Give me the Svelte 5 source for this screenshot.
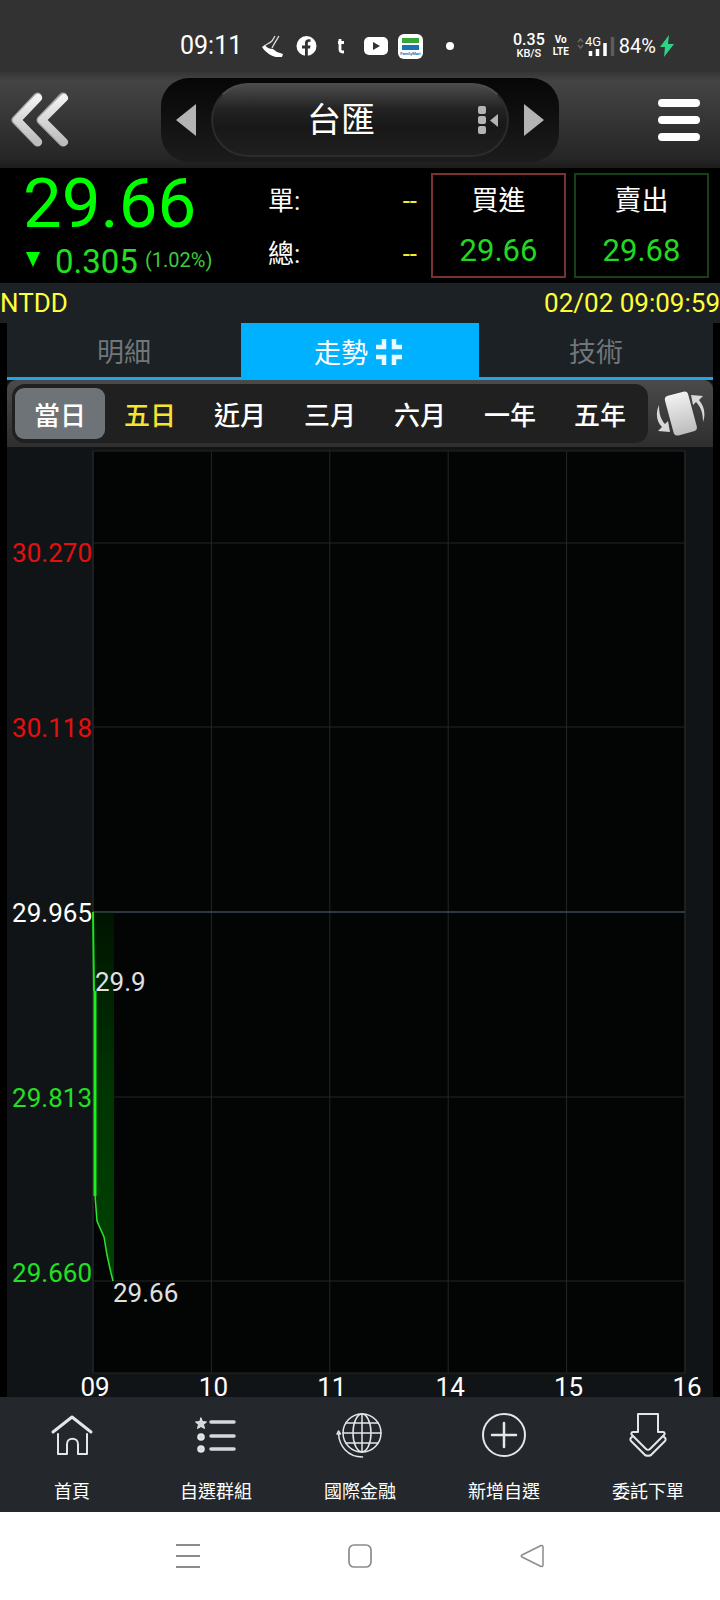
<script>
  let periods = ["當日", "五日", "近月", "三月", "六月", "一年", "五年"];
  let selectedPeriod = "當日";
  let visited = "五日";

  let tabs = ["明細", "走勢", "技術"];
  let selectedTab = "走勢";

  // chart geometry
  const plot = { left: 86, right: 678, top: 4, bottom: 926 };
  const hours = ["09", "10", "11", "14", "15", "16"];
  const step = (plot.right - plot.left) / (hours.length - 1);
  const levels = [
    { text: "30.270", line: 96, base: 115, kind: "up" },
    { text: "30.118", line: 280, base: 290, kind: "up" },
    { text: "29.965", line: 465, base: 475, kind: "flat" },
    { text: "29.813", line: 650, base: 660, kind: "down" },
    { text: "29.660", line: 834, base: 835, kind: "down" }
  ];
  const tail = "88,748 90,774 97,790 100,808 104,826 106,834";

  const menu = [
    { id: "home", label: "首頁" },
    { id: "list", label: "自選群組" },
    { id: "globe", label: "國際金融" },
    { id: "add", label: "新增自選" },
    { id: "order", label: "委託下單" }
  ];
</script>

<div class="page">
  <div class="status">
    <span class="clock">09:11</span>
    <div class="notices">
      <svg width="35" height="26" viewBox="0 0 35 26">
        <path d="M8 14l3-2c2 3 5 4 8 4l4 3c2 1 4 1 6 2l-1 3h-6c-5-1-11-5-14-10z" fill="#fff" />
        <path d="M10 13c3-2 6-3 8-5l3-5M18 15c2-4 4-7 7-12" fill="none" stroke="#ddd" stroke-width="1.3" />
      </svg>
      <svg width="35" height="26" viewBox="0 0 35 26">
        <circle cx="17.500" cy="13" r="10" fill="#fff" />
        <path d="M16 23v-7.500h-3v-3h3v-2.500c0-3 1.800-4.300 5.500-3.700v2.600c-2-.2-2.700.2-2.700 1.600v2h2.700l-.5 3h-2.200V23z" fill="#323232" />
      </svg>
      <svg width="35" height="26" viewBox="0 0 35 26">
        <path d="M16 6v10.500c0 2 1 2.500 4 2.500M14 9.500h6" fill="none" stroke="#fff" stroke-width="2.800" />
      </svg>
      <svg width="35" height="26" viewBox="0 0 35 26">
        <rect x="5" y="4" width="24" height="18" rx="5" fill="#fff" />
        <path d="M14 9l7 4-7 4z" fill="#323232" />
      </svg>
      <svg width="35" height="26" viewBox="0 0 35 26">
        <rect x="4" y="1" width="25" height="25" rx="6" fill="#fff" />
        <path d="M8 5h17v5H8z" fill="#37a53c" />
        <path d="M8 12h17v5H8z" fill="#1673b8" />
        <text x="16.500" y="22" text-anchor="middle" font-size="4" font-weight="700" fill="#1673b8">FamilyMart</text>
      </svg>
      <svg width="35" height="26" viewBox="0 0 35 26"><circle cx="21" cy="13" r="4" fill="#fff" /></svg>
    </div>
    <div class="radio">
      <span class="rate"><b>0.35</b><i>KB/S</i></span>
      <span class="volte"><b>Vo</b><b>LTE</b></span>
      <svg width="38" height="24" viewBox="0 0 38 24">
        <path d="M1 8l2.500-3L6 8M1 11l2.500 3L6 11" fill="none" stroke="#666" stroke-width="1.500" />
        <text x="8" y="12" font-size="13" fill="#fff">4G</text>
        <path d="M13.500 22v-5M20.500 22v-7M28 22V9" stroke="#fff" stroke-width="3.500" />
        <path d="M35.500 22V3" stroke="#5c5c5c" stroke-width="3.500" />
      </svg>
      <span class="battery">84%</span>
      <svg width="14" height="22" viewBox="0 0 14 22"><path d="M9 0L0 12h5L4 22l10-13H8z" fill="#2fd384" /></svg>
    </div>
  </div>

  <header>
    <button class="back" aria-label="back">
      <svg width="60" height="60" viewBox="0 0 60 60">
        <defs>
          <linearGradient id="metal" x1="0" y1="0" x2="0" y2="1">
            <stop offset="0" stop-color="#f2f2f2" />
            <stop offset="1" stop-color="#bdbdbd" />
          </linearGradient>
        </defs>
        <g fill="none" stroke-linecap="round" stroke-linejoin="round">
          <path d="M27.500 7L6 30l21.500 22M53 7L31 30l22 22" stroke="#a6a6a6" stroke-width="9" />
          <path d="M28 8L7 30l21 22M54 8L32 30l22 22" stroke="url(#metal)" stroke-width="8" />
        </g>
      </svg>
    </button>
    <div class="switcher">
      <button class="arrow" aria-label="previous">
        <svg width="20" height="32" viewBox="0 0 20 32"><path d="M20 0v32L0 16z" fill="#b4b4b4" /></svg>
      </button>
      <button class="symbol">
        <span>台匯</span>
        <svg width="20" height="30" viewBox="0 0 20 30">
          <g fill="#b4b4b4">
            <rect x="0" y="1" width="8" height="8" rx="2" />
            <rect x="0" y="11" width="8" height="8" rx="2" />
            <rect x="0" y="21" width="8" height="8" rx="2" />
            <path d="M20 9v13l-8-6.500z" />
          </g>
        </svg>
      </button>
      <button class="arrow" aria-label="next">
        <svg width="20" height="32" viewBox="0 0 20 32"><path d="M0 0v32l20-16z" fill="#b4b4b4" /></svg>
      </button>
    </div>
    <button class="burger" aria-label="menu">
      <svg width="42" height="42" viewBox="0 0 42 42">
        <path d="M4 4h34M4 21h34M4 38h34" stroke="#fff" stroke-width="8" stroke-linecap="round" />
      </svg>
    </button>
  </header>

  <section class="quote">
    <div class="price">
      <strong>29.66</strong>
      <div class="change">
        <svg width="16" height="20" viewBox="0 0 16 20"><path d="M1 0h14L8 15z" fill="#0f0" /></svg>
        <span class="diff">0.305</span>
        <span class="pct">(1.02%)</span>
      </div>
    </div>
    <dl>
      <div><dt>單:</dt><dd>--</dd></div>
      <div><dt>總:</dt><dd>--</dd></div>
    </dl>
    <button class="deal buy"><span>買進</span><em>29.66</em></button>
    <button class="deal sell"><span>賣出</span><em>29.68</em></button>
  </section>

  <div class="info"><span>NTDD</span><time>02/02 09:09:59</time></div>

  <main>
    <div class="tabs">
      {#each tabs as tab}
        <button class:active={tab === selectedTab} on:click={() => (selectedTab = tab)}>
          {tab}
          {#if tab === selectedTab}
            <svg width="26" height="26" viewBox="0 0 26 26">
              <path d="M8 0v8H0M18 0v8h8M8 26v-8H0M18 26v-8h8" fill="none" stroke="#e8fbff" stroke-width="4.500" />
            </svg>
          {/if}
        </button>
      {/each}
    </div>

    <div class="periods">
      <div class="options">
        {#each periods as period}
          <button
            class:selected={period === selectedPeriod}
            class:visited={period === visited}
            on:click={() => (selectedPeriod = period)}>{period}</button>
        {/each}
      </div>
      <button class="rotate" aria-label="rotate">
        <svg width="50" height="48" viewBox="0 0 50 48">
          <rect x="13" y="3" width="24" height="41" rx="4" transform="rotate(-15 25 24)" fill="url(#metal)" />
          <path d="M3 15c-4 9-2 17 3 22l-4 4 12 1-2-11-3 3C5 30 3 24 3 15zM47 32c3-9 1-16-4-22l4-4-12-1 2 10 3-3c5 5 7 11 7 20z" fill="#d8d8d8" />
        </svg>
      </button>
    </div>

    <svg class="chart" viewBox="0 0 706 950">
      <defs>
        <linearGradient id="fade" x1="0" y1="0" x2="0" y2="1">
          <stop offset="0" stop-color="#001400" />
          <stop offset="0.500" stop-color="#003600" />
          <stop offset="1" stop-color="#004200" />
        </linearGradient>
      </defs>
      <rect class="plot" x={plot.left} y={plot.top} width={plot.right - plot.left} height={plot.bottom - plot.top} />
      {#each levels as level}
        <line class="grid" x1={plot.left} x2={plot.right} y1={level.line} y2={level.line} />
      {/each}
      <polygon points="87,465 107,465 107,834 {tail.split(' ').reverse().join(' ')}" fill="url(#fade)" />
      {#each hours as hour, i}
        <line class="grid" x1={plot.left + step * i} x2={plot.left + step * i} y1={plot.top} y2={plot.bottom} />
        <text class="hour" x={plot.left + step * i + 2} y="949">{hour}</text>
      {/each}
      <line class="zero" x1={plot.left} x2={plot.right} y1="465" y2="465" />
      <path d="M86 465l1 79" stroke="#14e614" stroke-width="2" />
      <path d="M88 544v205" stroke="#1ef01e" stroke-width="3" />
      <polyline points={tail} fill="none" stroke="#30e030" stroke-width="1.500" />
      {#each levels as level}
        <text class="level {level.kind}" x="85" y={level.base}>{level.text}</text>
      {/each}
      <text class="mark" x="88" y="544">29.9</text>
      <text class="mark" x="106" y="855">29.66</text>
    </svg>
  </main>

  <nav class="menu">
    {#each menu as item}
      <a href="#{item.id}">
        <svg width="48" height="48" viewBox="0 0 48 48">
          <g fill="none" stroke="#e4e6e8" stroke-width="2" stroke-linecap="round" stroke-linejoin="round">
            {#if item.id === "home"}
              <path d="M5 21L24 6l19 15" stroke-width="3" />
              <path d="M10 23v20h9V33c0-7 11-7 11 0v10h9V23" />
            {:else if item.id === "list"}
              <path d="M19 11h23M19 25h23M19 38h23" stroke="#d6d8da" stroke-width="3.500" />
              <path d="M9 7l1.500 3.500 4 .500-3 2.500 1 4-3.500-2-3.500 2 1-4-3-2.500 4-.500z" fill="#d6d8da" stroke-width="1" />
              <circle cx="9" cy="26" r="2.800" fill="#d6d8da" />
              <circle cx="9" cy="38" r="2.800" fill="#d6d8da" />
            {:else if item.id === "globe"}
              <g stroke-width="1.500">
                <circle cx="26" cy="22" r="19" />
                <ellipse cx="26" cy="22" rx="9" ry="19" />
                <path d="M26 3v38M7 22h38M10 12h32M10 32h32" />
                <path d="M1 23l1.500-3 2 3zM2.500 23c1 12 9 23 24 23" />
              </g>
            {:else if item.id === "add"}
              <circle cx="24" cy="24" r="21" />
              <path d="M24 12v24M12 24h24" stroke-width="2.500" />
            {:else}
              <path d="M14 3h20v18h5c2 0 2 2 1 3L26 38c-1 1-3 1-4 0L8 24c-1-1-1-3 1-3h5z" />
              <path d="M8 26c-2 1-2 3-1 4l14 14c2 1 4 1 6 0l14-14c1-1 1-3-1-4" />
            {/if}
          </g>
        </svg>
        <span>{item.label}</span>
      </a>
    {/each}
  </nav>

  <div class="system">
    <button aria-label="recent">
      <svg width="24" height="24" viewBox="0 0 24 24"><path d="M0 1h24M0 12h24M0 23h24" stroke="#8c8c8c" stroke-width="2" /></svg>
    </button>
    <button aria-label="home">
      <svg width="24" height="24" viewBox="0 0 24 24"><rect x="1" y="1" width="22" height="22" rx="5" fill="none" stroke="#8c8c8c" stroke-width="1.700" /></svg>
    </button>
    <button aria-label="return">
      <svg width="24" height="24" viewBox="0 0 24 24"><path d="M21 1.500L2 11c-1 .500-1 1.500 0 2l19 9.500c1 .300 2-.200 2-1.500V3c0-1.300-1-1.800-2-1.500z" fill="none" stroke="#8c8c8c" stroke-width="1.500" /></svg>
    </button>
  </div>
</div>

<style>
  :global(body) {
    margin: 0;
    background: #000;
  }

  .page {
    font-family: Roboto, "Noto Sans CJK TC", sans-serif;
    color: #fff;
    background: #000;
  }

  button {
    display: flex;
    align-items: center;
    justify-content: center;
    margin: 0;
    padding: 0;
    border: none;
    background: none;
    color: inherit;
    font: inherit;
    cursor: pointer;
  }

  svg {
    display: block;
    flex: none;
  }

  .status {
    display: flex;
    align-items: center;
    height: 72px;
    box-sizing: border-box;
    padding: 20px 46px 0 180px;
    background: #323232;
  }

  .clock {
    font-size: 25px;
    line-height: 28px;
  }

  .notices {
    display: flex;
    margin-left: 12px;
  }

  .radio {
    display: flex;
    align-items: center;
    margin-left: auto;
    gap: 4px;
  }

  .rate,
  .volte {
    display: flex;
    flex-direction: column;
    align-items: center;
    margin-right: 4px;
  }

  .rate b {
    font-size: 16px;
    line-height: 14px;
    font-weight: 500;
  }

  .rate i {
    font-size: 11px;
    line-height: 13px;
    font-style: normal;
    font-weight: 500;
  }

  .volte b {
    font-size: 10px;
    line-height: 12px;
  }

  .battery {
    font-size: 20px;
    line-height: 24px;
  }

  header {
    display: grid;
    grid-template-columns: 161px 1fr 161px;
    align-items: center;
    height: 96px;
    background: linear-gradient(#363636, #444 10%, #262626 90%, #1c1c1c);
  }

  .back {
    justify-self: start;
    margin-left: 10px;
  }

  .burger {
    justify-self: end;
    margin-right: 20px;
  }

  .switcher {
    display: flex;
    height: 84px;
    box-sizing: border-box;
    padding: 5px 0;
    border-radius: 28px;
    background: linear-gradient(#060606, #111 50%, #1c1c1c);
  }

  .arrow {
    width: 50px;
  }

  .symbol {
    flex: 1;
    justify-content: flex-end;
    gap: 103px;
    padding-right: 9px;
    border: 2px solid #2c2c2c;
    border-top-color: #4c4c4c;
    border-radius: 38px;
    background: linear-gradient(#4a4a4a, #222 35%, #181818 60%, #1f1f1f);
    font-size: 34px;
    line-height: 40px;
  }

  .quote {
    display: flex;
    height: 115px;
    box-sizing: border-box;
    padding: 5px 11px 5px 23px;
  }

  .price {
    flex: 1;
    white-space: nowrap;
  }

  .price strong {
    display: block;
    font-size: 69px;
    line-height: 62px;
    font-weight: 400;
    color: #0f0;
  }

  .change {
    display: flex;
    align-items: center;
    padding-left: 2px;
    line-height: 50px;
  }

  .diff {
    margin-left: 14px;
    font-size: 33px;
    color: #22e022;
  }

  .pct {
    margin-left: 7px;
    padding-bottom: 4px;
    font-size: 20px;
    color: #3ccb3c;
  }

  dl {
    display: flex;
    flex-direction: column;
    width: 149px;
    margin: 2px 14px 0 0;
    font-size: 26px;
    line-height: 53px;
  }

  dl div {
    display: flex;
    justify-content: space-between;
  }

  dd {
    margin: 0;
    color: #f6ec2c;
  }

  .deal {
    flex-direction: column;
    width: 135px;
    box-sizing: border-box;
    border: 2px solid #7a3131;
    font-size: 27px;
    line-height: 50px;
  }

  .deal em {
    font-size: 31px;
    font-style: normal;
    color: #23d823;
  }

  .sell {
    margin-left: 8px;
    border-color: #17401a;
  }

  .info {
    display: flex;
    justify-content: space-between;
    background: #1b2125;
    color: #ffff38;
    font-size: 26px;
    line-height: 40px;
  }

  main {
    margin: 0 7px;
    background: #111417;
  }

  .tabs {
    display: flex;
    border-bottom: 3px solid #1fa7e6;
    background: #1b2125;
  }

  .tabs button {
    flex: 1;
    gap: 8px;
    height: 54px;
    color: #71767a;
    font-size: 27px;
  }

  .tabs .active {
    margin-bottom: -3px;
    padding: 0 4px 0 0;
    background: #00b1ff;
    color: #fff;
    height: 57px;
  }

  .periods {
    display: flex;
    height: 67px;
    box-sizing: border-box;
    padding: 4px 0 4px 5px;
    border-radius: 9px 9px 0 0;
    background: linear-gradient(#4a4a4a, #2e2e2e);
  }

  .options {
    display: flex;
    flex: 1;
    padding: 4px 3px;
    border-radius: 13px;
    background: #202020;
  }

  .options button {
    flex: 1;
    border-radius: 9px;
    font-size: 26px;
    font-weight: 500;
  }

  .options .visited {
    color: #f5e52e;
  }

  .options .selected {
    background: #6e7377;
  }

  .rotate {
    width: 65px;
  }

  .chart {
    width: 100%;
    height: auto;
    overflow: visible;
    font-size: 26px;
  }

  .plot {
    fill: #030504;
    stroke: #242726;
  }

  .grid {
    stroke: #242726;
  }

  .zero {
    stroke: #4a5a66;
  }

  .hour {
    fill: #fff;
    text-anchor: middle;
  }

  .level {
    text-anchor: end;
  }

  .up {
    fill: #e60f0f;
  }

  .flat {
    fill: #fff;
  }

  .down {
    fill: #22e022;
  }

  .mark {
    fill: #e0e0e0;
  }

  .menu {
    display: flex;
    padding: 14px 0 8px;
    background: #24282c;
  }

  .menu a {
    display: flex;
    flex: 1;
    flex-direction: column;
    align-items: center;
    gap: 21px;
    color: #fff;
    font-size: 18px;
    line-height: 24px;
    text-decoration: none;
  }

  .system {
    display: grid;
    grid-template-columns: repeat(3, 1fr);
    height: 88px;
    box-sizing: border-box;
    padding: 0 102px;
    background: #fff;
  }
</style>
